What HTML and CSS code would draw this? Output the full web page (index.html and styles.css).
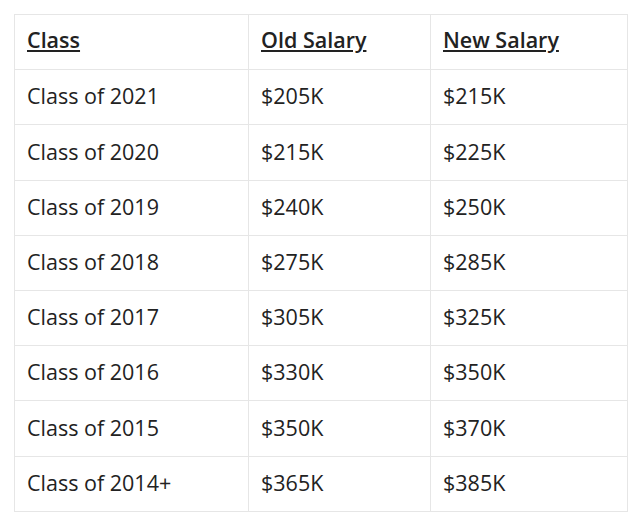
FILE: index.html
```html
<!DOCTYPE html>
<html>
<head>
<meta charset="utf-8">
<link rel="stylesheet" href="styles.css">
</head>
<body>
<table class="salary">
  <colgroup><col class="c1"><col class="c2"><col class="c3"></colgroup>
  <thead>
    <tr><th>Class</th><th>Old Salary</th><th>New Salary</th></tr>
  </thead>
  <tbody>
    <tr><td>Class of 2021</td><td>$205K</td><td>$215K</td></tr>
    <tr><td>Class of 2020</td><td>$215K</td><td>$225K</td></tr>
    <tr><td>Class of 2019</td><td>$240K</td><td>$250K</td></tr>
    <tr><td>Class of 2018</td><td>$275K</td><td>$285K</td></tr>
    <tr><td>Class of 2017</td><td>$305K</td><td>$325K</td></tr>
    <tr><td>Class of 2016</td><td>$330K</td><td>$350K</td></tr>
    <tr><td>Class of 2015</td><td>$350K</td><td>$370K</td></tr>
    <tr><td>Class of 2014+</td><td>$365K</td><td>$385K</td></tr>
  </tbody>
</table>
</body>
</html>
```
FILE: styles.css
```css
html, body {
  margin: 0;
  padding: 0;
  background: #ffffff;
}
body {
  padding: 14px 0 0 14px;
  font-family: "Open Sans", "Liberation Sans", sans-serif;
  color: #222222;
}
.salary {
  border-collapse: collapse;
  width: 613px;
  table-layout: fixed;
}
.c1 { width: 234px; }
.c2 { width: 182px; }
.c3 { width: 197px; }
.salary th, .salary td {
  border: 1px solid #e6e6e6;
  height: 55.2px;
  padding: 0 0 2px 12px;
  text-align: left;
  font-size: 21.5px;
  line-height: 1.2;
  box-sizing: border-box;
  vertical-align: middle;
}
.salary th {
  font-weight: 600;
  padding-bottom: 5px;
  text-decoration: underline;
  text-underline-offset: 2px;
  text-decoration-thickness: 2px;
}
.salary td {
  font-weight: 400;
}
```
